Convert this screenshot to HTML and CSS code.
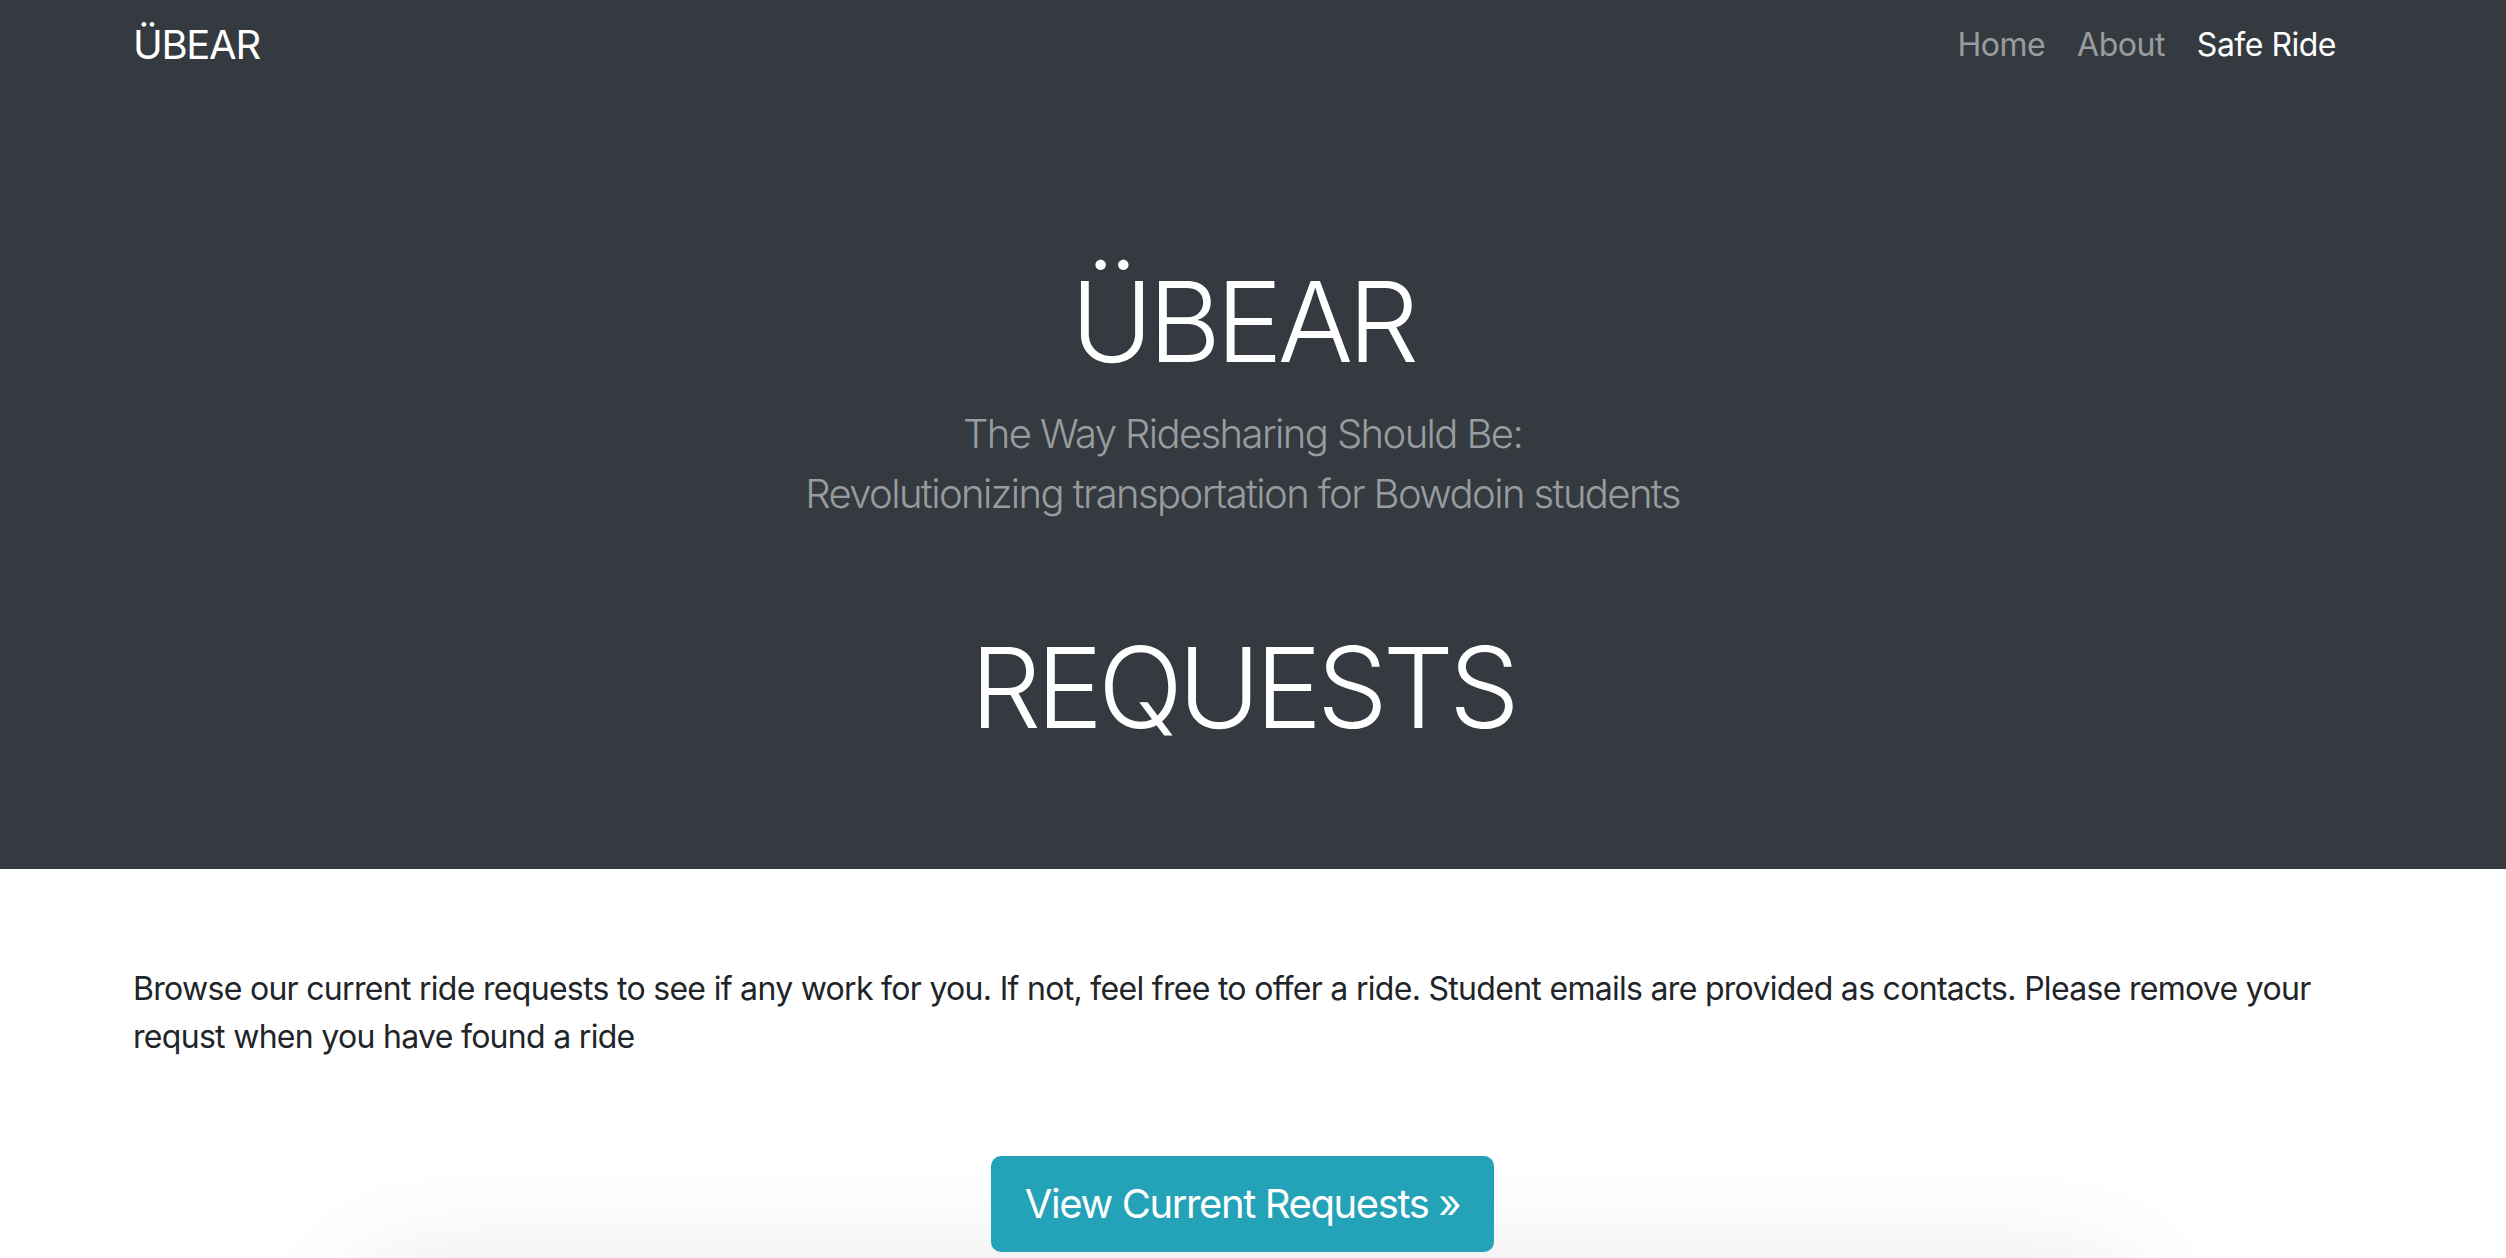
FILE: index.html
```html
<!DOCTYPE html>
<html lang="en">
<head>
<meta charset="utf-8">
<title>ÜBEAR – Requests</title>
<link rel="stylesheet" href="styles.css">
</head>
<body>
<header class="hero">
  <nav class="navbar">
    <a class="brand" href="#">ÜBEAR</a>
    <ul class="nav">
      <li><a class="nav-link" href="#">Home</a></li>
      <li><a class="nav-link" href="#">About</a></li>
      <li><a class="nav-link active" href="#">Safe Ride</a></li>
    </ul>
  </nav>
  <div class="hero-body">
    <h1 class="display">ÜBEAR</h1>
    <p class="lead">The Way Ridesharing Should Be:<br>Revolutionizing transportation for Bowdoin students</p>
    <h1 class="display requests">REQUESTS</h1>
  </div>
</header>
<main class="content">
  <p class="intro">Browse our current ride requests to see if any work for you. If not, feel free to offer a ride. Student emails are provided as contacts. Please remove your requst when you have found a ride</p>
  <div class="actions">
    <a class="btn" href="#">View Current Requests »</a>
  </div>
  <div class="panel"></div>
</main>
</body>
</html>
```

FILE: styles.css
```css
* { box-sizing: border-box; }
html, body { margin: 0; padding: 0; }
body {
  font-family: Inter, "Noto Sans", "Liberation Sans", sans-serif;
  color: #212529;
  background: #fff;
  overflow: hidden;
}
a { text-decoration: none; }

.hero {
  background: #343a40;
  color: #fff;
  padding: 0 154px 115px 133px;
}
.navbar {
  height: 90px;
  display: flex;
  align-items: center;
  justify-content: space-between;
}
.brand {
  color: #fff;
  font-size: 40px;
  line-height: 60px;
  letter-spacing: -1.3px;
}
.nav {
  list-style: none;
  margin: 0;
  padding: 0;
  display: flex;
}
.nav-link {
  display: block;
  padding: 0 16px;
  font-size: 32px;
  line-height: 48px;
  letter-spacing: -0.5px;
  color: rgba(255,255,255,.5);
}
.nav-link.active { color: #fff; }

.hero-body {
  display: flex;
  flex-direction: column;
  align-items: center;
  text-align: center;
  padding-top: 164px;
}
.display {
  margin: 0 0 16px;
  font-size: 112px;
  font-weight: 300;
  line-height: 134px;
  letter-spacing: -5px;
}
.lead {
  margin: 0;
  font-size: 40px;
  font-weight: 300;
  line-height: 60px;
  letter-spacing: -1.6px;
  color: rgba(255,255,255,.5);
}
.display.requests {
  margin: 96px 0 0;
}

.content {
  padding: 96px 154px 0 133px;
}
.intro {
  margin: 0;
  font-size: 32px;
  line-height: 48px;
  letter-spacing: -0.7px;
}
.actions {
  display: flex;
  justify-content: center;
  margin-top: 95px;
  position: relative;
  z-index: 1;
}
.btn {
  display: inline-block;
  padding: 16px 32px;
  border: 2px solid #23a2b8;
  border-radius: 10px;
  background: #23a2b8;
  color: #fff;
  font-size: 40px;
  line-height: 60px;
  letter-spacing: -1.4px;
}
.panel {
  width: 1750px;
  height: 300px;
  margin: 30px auto 0;
  background: #fff;
  box-shadow: 0 0 120px rgba(0,0,0,.14);
}
```
